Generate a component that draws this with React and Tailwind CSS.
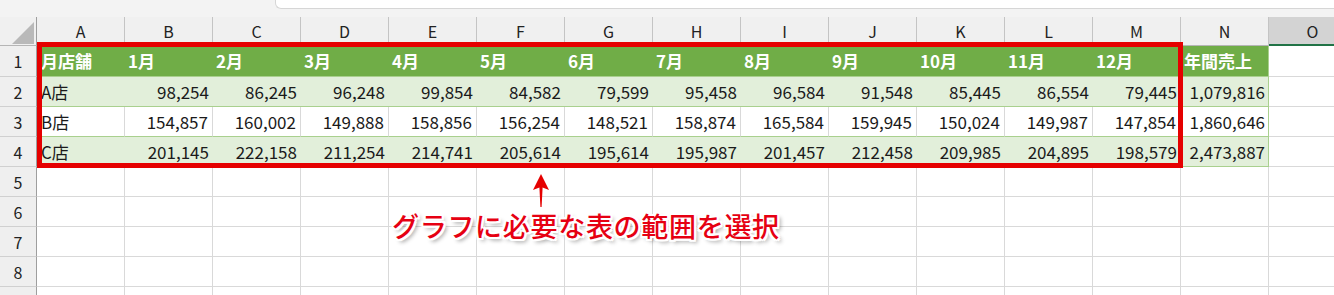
import React from 'react';

const letters = ['A', 'B', 'C', 'D', 'E', 'F', 'G', 'H', 'I', 'J', 'K', 'L', 'M', 'N', 'O'];
const months = ['1月', '2月', '3月', '4月', '5月', '6月', '7月', '8月', '9月', '10月', '11月', '12月'];

const stores = [
  { name: 'A店', sales: [98254, 86245, 96248, 99854, 84582, 79599, 95458, 96584, 91548, 85445, 86554, 79445], total: 1079816, shade: true },
  { name: 'B店', sales: [154857, 160002, 149888, 158856, 156254, 148521, 158874, 165584, 159945, 150024, 149987, 147854], total: 1860646, shade: false },
  { name: 'C店', sales: [201145, 222158, 211254, 214741, 205614, 195614, 195987, 201457, 212458, 209985, 204895, 198579], total: 2473887, shade: true },
];

const fmt = (n) => n.toLocaleString('en-US');

const RowHead = ({ n, h = 'h-[30px]' }) => (
  <div className={`${h} w-[37px] shrink-0 flex items-center justify-center bg-[#efefef] border-r border-r-[#9e9e9e] border-b border-b-[#d0d0d0] text-[16px] text-[#222]`}>
    {n}
  </div>
);

const BlankCell = () => <div className="w-[88px] shrink-0 border-r border-b border-[#d9d9d9]" />;

const App = () => {
  return (
    <div className="relative w-[1334px] h-[295px] overflow-hidden bg-white font-['Noto_Sans_CJK_JP',sans-serif]">
      {/* Top strip */}
      <div className="h-[17px] bg-[#f3f3f3] flex">
        <div className="ml-[275px] h-[9px] flex-1 bg-white border-l border-b border-[#d6d6d6] rounded-bl-[6px]" />
      </div>

      {/* Column headers */}
      <div className="flex h-[29px] bg-[#f0f0f0]">
        <div className="w-[37px] shrink-0 relative border-r border-r-[#9e9e9e] border-b border-b-[#b5b5b5]">
          <svg className="absolute left-[12px] top-[5px]" width="22" height="22" viewBox="0 0 22 22">
            <polygon points="0,22 22,0 22,22" fill="#b9b9b9" />
          </svg>
        </div>
        {letters.map((l) => (
          <div
            key={l}
            className={`w-[88px] shrink-0 flex items-center justify-center text-[16px] text-[#222] border-r border-r-[#c4c4c4] ${
              l === 'O' ? 'bg-[#d3d3d3] border-b-2 border-b-[#217346]' : 'border-b border-b-[#b5b5b5]'
            }`}
          >
            {l}
          </div>
        ))}
      </div>

      {/* Row 1 */}
      <div className="flex h-[31px]">
        <RowHead n={1} h="h-[31px]" />
        {['月店舗', ...months, '年間売上'].map((t, i) => (
          <div
            key={t}
            className={`w-[88px] shrink-0 flex items-center bg-[#70ad47] text-white font-bold text-[17px] border-b border-[#a9d08e] ${
              i === 0 ? 'pl-[4px]' : 'pl-[3px]'
            } ${i === 13 ? 'border-r' : ''}`}
          >
            {t}
          </div>
        ))}
        <BlankCell />
      </div>

      {/* Data rows */}
      {stores.map((s, r) => (
        <div key={s.name} className="flex h-[30px]">
          <RowHead n={r + 2} />
          <div
            className={`w-[88px] shrink-0 flex items-center pl-[4px] text-[17px] text-[#1a1a1a] border-b border-[#a9d08e] ${
              s.shade ? 'bg-[#e2efda]' : 'bg-white border-r border-r-[#d9d9d9]'
            }`}
          >
            {s.name}
          </div>
          {s.sales.map((v, i) => (
            <div
              key={i}
              className={`w-[88px] shrink-0 flex items-center justify-end pr-[4px] text-[17px] text-[#1a1a1a] border-b border-[#a9d08e] ${
                s.shade ? 'bg-[#e2efda]' : 'bg-white border-r border-r-[#d9d9d9]'
              }`}
            >
              {fmt(v)}
            </div>
          ))}
          <div
            className={`w-[88px] shrink-0 flex items-center justify-end pr-[3px] text-[17px] text-[#1a1a1a] border-b border-r border-[#a9d08e] ${
              s.shade ? 'bg-[#e2efda]' : 'bg-white'
            }`}
          >
            {fmt(s.total)}
          </div>
          <BlankCell />
        </div>
      ))}

      {/* Empty rows (row 9 is cut off at the bottom edge) */}
      {[5, 6, 7, 8, null].map((n, k) => (
        <div key={k} className="flex h-[30px]">
          <RowHead n={n} />
          {letters.map((l) => (
            <BlankCell key={l} />
          ))}
        </div>
      ))}

      {/* Selection outline */}
      <div className="absolute left-[37px] top-[42px] w-[1146px] h-[126px] border-[5px] border-[#e50000] pointer-events-none" />

      {/* Arrow */}
      <svg className="absolute left-[532px] top-[174px]" width="18" height="34" viewBox="0 0 18 34">
        <polygon points="9,0 17,16 10.6,13.5 9.6,33 8.4,33 7.4,13.5 1,16" fill="#e50000" />
      </svg>

      {/* Annotation */}
      <div className="absolute left-[392px] top-[212px] text-[27px] leading-none font-medium tracking-[0.7px] text-[#e60012] whitespace-nowrap [text-shadow:-2px_-2px_0_#fff,2px_-2px_0_#fff,-2px_2px_0_#fff,2px_2px_0_#fff,0_2px_0_#fff,0_-2px_0_#fff,2px_0_0_#fff,-2px_0_0_#fff,3px_3px_4px_rgba(0,0,0,0.45)]">
        グラフに必要な表の範囲を選択
      </div>
    </div>
  );
};

export default App;
